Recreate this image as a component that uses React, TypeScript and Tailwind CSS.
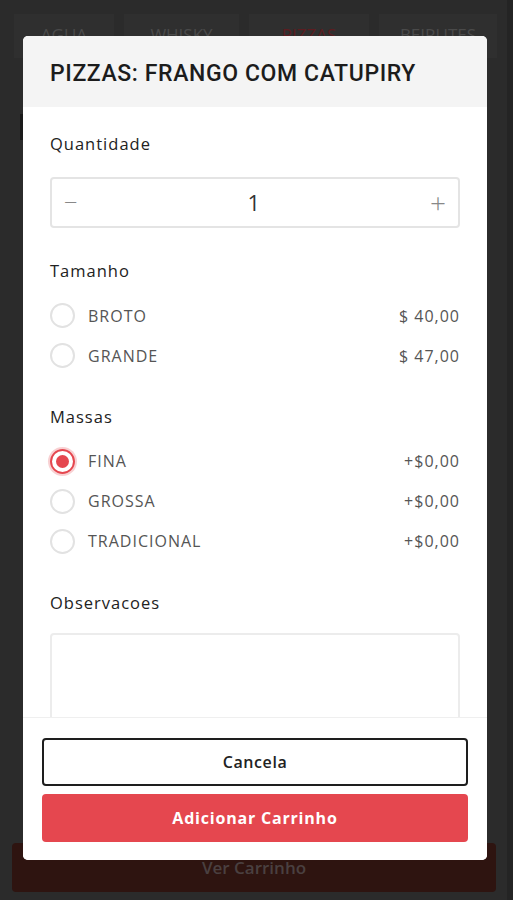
import React from "react";

const body = { fontFamily: '"Open Sans", "Noto Sans", sans-serif' };
const title = { fontFamily: 'Roboto, "Noto Sans", sans-serif' };

function Radio({ checked }: { checked?: boolean }) {
  if (checked)
    return (
      <span className="flex h-[25px] w-[25px] shrink-0 items-center justify-center rounded-full border-2 border-[#e5474f] shadow-[0_0_0_2px_rgba(229,71,79,0.25)]">
        <span className="h-[13px] w-[13px] rounded-full bg-[#e5474f]" />
      </span>
    );
  return <span className="h-[25px] w-[25px] shrink-0 rounded-full border-2 border-[#e2e2e2]" />;
}

function Option({ label, price, checked }: { label: string; price: string; checked?: boolean }) {
  return (
    <div className="flex h-[40px] items-center">
      <Radio checked={checked} />
      <span className="ml-[13px] flex-1 text-[16px] tracking-[1px] text-[#555]">{label}</span>
      <span className="text-[16px] tracking-[1px] text-[#555]">{price}</span>
    </div>
  );
}

export default function App() {
  return (
    <div className="relative h-[900px] w-[513px] overflow-hidden bg-[#2b2b2b]" style={body}>
      {/* background page */}
      <div className="flex h-[64px] items-start gap-[10px] px-[14px] pt-[14px]">
        <div className="flex h-[44px] w-[100px] items-start justify-center bg-[#2f2f2f] pt-[8px] text-[17px] text-[#4a4a4a]">AGUA</div>
        <div className="flex h-[44px] w-[115px] items-start justify-center bg-[#2f2f2f] pt-[8px] text-[17px] text-[#4a4a4a]">WHISKY</div>
        <div className="flex h-[44px] w-[120px] items-start justify-center bg-[#2f2f2f] pt-[8px] text-[17px] text-[#5c1c20]">PIZZAS</div>
        <div className="flex h-[44px] w-[118px] items-start justify-center bg-[#2f2f2f] pt-[8px] text-[17px] text-[#4a4a4a]">BEIRUTES</div>
      </div>
      <div className="ml-[20px] mt-[50px] h-[26px] w-[4px] bg-[#1a1a1a]" />
      <div className="absolute right-0 top-0 h-[900px] w-[6px] bg-[#242424]" />
      <div className="absolute bottom-[8px] left-[12px] flex h-[49px] w-[484px] items-end justify-center rounded-[4px] bg-[#2e1410] pb-[12px] text-[17px] font-semibold text-[#4a4040]">
        Ver Carrinho
      </div>

      {/* modal */}
      <div className="absolute left-[23px] top-[36px] flex h-[824px] w-[464px] flex-col overflow-hidden rounded-[5px] bg-white">
        <div className="flex h-[71px] shrink-0 items-center bg-[#f4f4f4] px-[27px] pt-[5px]">
          <h1 className="text-[23px] font-medium tracking-[0.6px] text-[#1c1c1c]" style={title}>
            PIZZAS: FRANGO COM CATUPIRY
          </h1>
        </div>
        <div className="min-h-0 flex-1 overflow-hidden px-[27px]">
          <div className="mt-[25px] text-[16.5px] tracking-[1px] text-[#222]">Quantidade</div>
          <div className="mt-[20px] flex h-[51px] items-center rounded-[4px] border-2 border-[#e4e4e4] px-[12px] text-[#888]">
            <span className="text-[24px] font-light leading-none">−</span>
            <span className="flex-1 text-center text-[22px] text-[#333]">1</span>
            <span className="text-[28px] font-light leading-none">+</span>
          </div>
          <div className="mt-[31px] text-[16.5px] tracking-[1px] text-[#222]">Tamanho</div>
          <div className="mt-[12px] flex flex-col">
            <Option label="BROTO" price="$ 40,00" />
            <Option label="GRANDE" price="$ 47,00" />
          </div>
          <div className="mt-[29px] text-[16.5px] tracking-[1px] text-[#222]">Massas</div>
          <div className="mt-[12px] flex flex-col">
            <Option label="FINA" price="+$0,00" checked />
            <Option label="GROSSA" price="+$0,00" />
            <Option label="TRADICIONAL" price="+$0,00" />
          </div>
          <div className="mt-[30px] text-[16.5px] tracking-[1px] text-[#222]">Observacoes</div>
          <div className="mt-[17px] h-[100px] rounded-[4px] border-2 border-[#ececec]" />
        </div>
        <div className="flex h-[143px] shrink-0 flex-col gap-[8px] border-t border-[#efefef] bg-white px-[19px] pt-[20px]">
          <button className="flex h-[48px] items-center justify-center rounded-[4px] border-2 border-[#1e1e1e] bg-white text-[16px] font-semibold tracking-[0.6px] text-[#222]">
            Cancela
          </button>
          <button className="flex h-[48px] items-center justify-center rounded-[4px] bg-[#e5474f] text-[16px] font-bold tracking-[0.8px] text-white">
            Adicionar Carrinho
          </button>
        </div>
      </div>
    </div>
  );
}
